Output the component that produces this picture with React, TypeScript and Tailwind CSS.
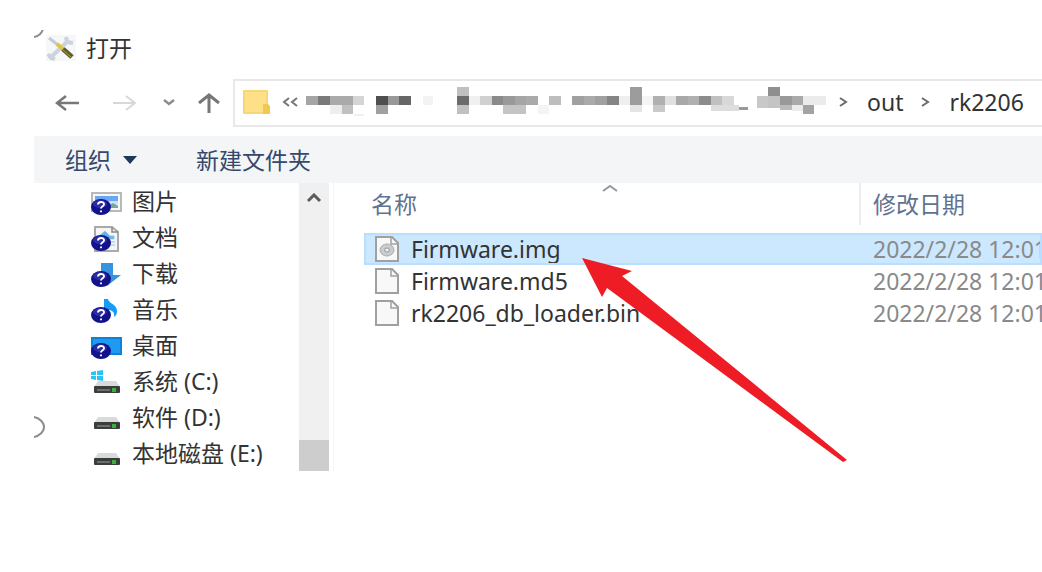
import { ReactNode, useState } from "react";

interface FileProps {
    name: string;
    date: string;
    disc?: boolean;
}

const files: FileProps[] = [
    { name: 'Firmware.img', date: '2022/2/28 12:01', disc: true },
    { name: 'Firmware.md5', date: '2022/2/28 12:01' },
    { name: 'rk2206_db_loader.bin', date: '2022/2/28 12:01' },
]

// hidden part of the path: x, y, width, height, color
const mosaic: [number, number, number, number, string][] = [
    [0, 9, 12, 9, '#a5a5a5'], [12, 9, 12, 9, '#7a7a7a'], [24, 9, 23, 9, '#aaaaaa'], [47, 9, 11, 9, '#d5d5d5'],
    [24, 18, 12, 9, '#eeeeee'], [36, 18, 11, 9, '#c0c0c0'], [48, 27, 10, 2, '#f0f0f0'],
    [70, 9, 12, 9, '#4f4f4f'], [82, 9, 11, 9, '#999999'], [93, 9, 12, 9, '#666666'], [70, 18, 12, 9, '#a0a0a0'],
    [117, 9, 10, 9, '#f3f3f3'],
    [151, 0, 12, 9, '#c0c0c0'], [151, 9, 12, 9, '#6b6b6b'], [151, 18, 12, 9, '#c0c0c0'],
    [163, 9, 11, 9, '#f0f0f0'], [174, 9, 12, 9, '#d0d0d0'], [186, 9, 11, 9, '#8a8a8a'], [197, 9, 12, 9, '#999999'],
    [209, 9, 11, 9, '#a5a5a5'], [220, 9, 12, 9, '#aaaaaa'], [197, 18, 23, 9, '#c4c4c4'], [232, 18, 11, 9, '#f4f4f4'],
    [243, 9, 12, 9, '#bdbdbd'],
    [266, 9, 12, 9, '#a0a0a0'], [278, 9, 11, 9, '#aaaaaa'], [289, 9, 12, 9, '#a0a0a0'], [301, 9, 12, 9, '#858585'],
    [313, 9, 11, 9, '#efefef'], [324, 0, 12, 18, '#9c9c9c'], [324, 18, 12, 7, '#e4e4e4'], [336, 9, 11, 9, '#f5f5f5'],
    [347, 9, 12, 9, '#b0b0b0'], [347, 18, 12, 7, '#c9c9c9'], [359, 9, 11, 9, '#e0e0e0'], [370, 9, 12, 9, '#a8a8a8'],
    [382, 9, 11, 9, '#b0b0b0'], [393, 9, 12, 9, '#8c8c8c'], [405, 9, 11, 9, '#c0c0c0'], [416, 9, 12, 9, '#d8d8d8'],
    [405, 18, 28, 6, '#dddddd'], [433, 20, 9, 3, '#999999'],
    [451, 9, 11, 12, '#c8c8c8'], [462, 0, 12, 9, '#8f8f8f'], [462, 9, 12, 12, '#c4c4c4'], [474, 9, 12, 9, '#999999'],
    [474, 18, 12, 5, '#bbbbbb'], [486, 9, 11, 9, '#aaaaaa'], [486, 18, 11, 6, '#ebebeb'], [497, 9, 23, 9, '#ebebeb'],
    [497, 18, 11, 9, '#a3a3a3'],
]

function Unknown() {
    return (
        <g>
            <ellipse cx="10" cy="17" rx="10" ry="8" fill="#12128a" />
            <ellipse cx="9" cy="14" rx="7" ry="4" fill="#3a3fb8" opacity="0.6" />
            <path d="M7 14.5c0-3.4 6.4-3.4 6 0-.2 1.800-3 1.800-3 4M10 20.500v1.800" fill="none" stroke="#fff" strokeWidth="1.900" />
        </g>
    )
}

function Drive() {
    return (
        <g>
            <path d="M7 11h18l4 6H3z" fill="#d9dadc" />
            <rect x="3" y="16" width="26" height="7" rx="1" fill="#3b3d3d" />
            <path d="M6 20h13" stroke="#6b706c" strokeWidth="2" />
            <rect x="21" y="18" width="4" height="4" fill="#37b03c" />
        </g>
    )
}

const places: { label: string; icon: ReactNode }[] = [
    {
        label: '图片',
        icon: <><rect x="1" y="3" width="29" height="18" fill="#f7f7f7" stroke="#b9b9b9" strokeWidth="2" /><rect x="4" y="6" width="23" height="12" fill="#c6e3fb" /><rect x="4" y="6" width="23" height="5" fill="#6ba5f5" /><path d="M14 18l8-5 5 3v2z" fill="#7aa39a" /><Unknown /></>
    },
    {
        label: '文档',
        icon: <><path d="M4 1h17l6 5v19H4z" fill="#f5f5f5" stroke="#aaaaaa" strokeWidth="2" /><path d="M21 1v5h6" fill="none" stroke="#888" strokeWidth="1.500" /><path d="M8 10l6-5 5 5h4v3H8zM18 16h6M18 19h6" fill="#5fb4e8" stroke="#8fc6e6" /><Unknown /></>
    },
    {
        label: '下载',
        icon: <><path d="M10 1h12v12h8L16 24 4 13h6z" fill="#3593e0" /><Unknown /></>
    },
    {
        label: '音乐',
        icon: <><path d="M13 1h4c1 5 9 5 9 12 0 3-1 5-3 6 1-5-2-7-6-7v8h-4z" fill="#169cf5" /><Unknown /></>
    },
    {
        label: '桌面',
        icon: <><rect x="0" y="3" width="31" height="18" fill="#0c83d9" /><rect x="2" y="5" width="27" height="14" fill="#1e9af0" /><Unknown /></>
    },
    {
        label: '系统 (C:)',
        icon: <><Drive /><path d="M0 2l5-1v4H0zM6 1l6-1v5H6zM0 6h5v4l-5-1zM6 6h6v5l-6-1z" fill="#2cc3f5" /></>
    },
    { label: '软件 (D:)', icon: <Drive /> },
    { label: '本地磁盘 (E:)', icon: <Drive /> },
]

function FileIcon({ disc }: { disc?: boolean }) {
    return (
        <svg width="24" height="26" viewBox="0 0 24 26" className="shrink-0">
            <path d="M1 1h16l6 6v18H1z" fill="#f8f8f8" stroke="#a0a0a0" strokeWidth="2" />
            <path d="M16 2v6h6" fill="none" stroke="#a0a0a0" strokeWidth="1.500" />
            {disc && (
                <>
                    <ellipse cx="12" cy="14" rx="7" ry="6" fill="#c9cccf" stroke="#a9adb0" />
                    <ellipse cx="12" cy="14" rx="2.500" ry="2" fill="#eeeeee" stroke="#999" />
                </>
            )}
        </svg>
    )
}

function Chevron() {
    return (
        <svg width="10" height="10" viewBox="0 0 10 10" fill="none" stroke="#6b6b6b" strokeWidth="2" className="shrink-0">
            <path d="M1 1l6 4-6 4" />
        </svg>
    )
}

export default function App() {
    const [selected, setSelected] = useState('Firmware.img')

    return (
        <div className="bg-white pl-[34px] pt-[30px] overflow-hidden text-[23px] leading-8 text-[#333333] font-['Noto_Sans','Noto_Sans_CJK_SC',sans-serif]">
            <main className="relative overflow-hidden whitespace-nowrap">
                <svg width="12" height="10" viewBox="0 0 12 10" className="absolute left-0 top-0">
                    <path d="M0 7q7-1 9-8" fill="none" stroke="#8c8c8c" strokeWidth="2" />
                </svg>
                <svg width="12" height="24" viewBox="0 0 12 24" className="absolute left-0 top-[385px]">
                    <path d="M0 2c5 1 10 5 10 10S5 21 0 22" fill="none" stroke="#8c8c8c" strokeWidth="2" />
                </svg>

                <header className="flex h-[49px] items-center gap-2.5 pb-3.5 pl-3">
                    <svg width="30" height="26" viewBox="0 0 30 26">
                        <rect width="30" height="26" fill="#f6f7f9" />
                        <path d="M4 23L23 5M2 19l3 4 4 1M20 2l1 5 6 1" fill="none" stroke="#cdd3de" strokeWidth="4" />
                        <path d="M3 3l9 7" stroke="#c3cad6" strokeWidth="3" />
                        <path d="M11 9l8 7" stroke="#e3c63c" strokeWidth="4" />
                        <path d="M17 14l9 8" stroke="#5f5b2c" strokeWidth="5" />
                        <path d="M17 15l8 7" stroke="#b9a53a" strokeWidth="1" />
                    </svg>
                    <h1>打开</h1>
                </header>

                <nav className="flex h-[48px] items-center">
                    <button aria-label="后退" className="flex w-[66px] shrink-0 justify-center">
                        <svg width="24" height="18" viewBox="0 0 24 18" fill="none" stroke="#777777" strokeWidth="2.500"><path d="M24 9H2M11 2L2 9l9 7" /></svg>
                    </button>
                    <button aria-label="前进" className="flex w-[50px] shrink-0 justify-center">
                        <svg width="24" height="18" viewBox="0 0 24 18" fill="none" stroke="#d8d8d8" strokeWidth="2"><path d="M0 9h22M13 2l9 7-9 7" /></svg>
                    </button>
                    <button aria-label="最近浏览的位置" className="flex w-[38px] shrink-0 justify-center">
                        <svg width="12" height="8" viewBox="0 0 12 8" fill="none" stroke="#8c8c8c" strokeWidth="2.500"><path d="M1 1l5 4 5-4" /></svg>
                    </button>
                    <button aria-label="上移" className="flex w-[42px] shrink-0 justify-center">
                        <svg width="22" height="20" viewBox="0 0 22 20" fill="none" stroke="#777777" strokeWidth="3"><path d="M11 20V2M1 10l10-8 10 8" /></svg>
                    </button>
                    <div className="ml-[3px] flex h-full flex-1 items-center border-2 border-r-0 border-[#e8e8e8] pb-0.5 pl-2">
                        <svg width="27" height="26" viewBox="0 0 27 26" className="shrink-0">
                            <rect x="0" y="1" width="25" height="24" rx="1" fill="#f8d773" />
                            <rect x="2" y="3" width="21" height="20" fill="#fee089" />
                            <path d="M20 15h5l2 2v8h-7z" fill="#efc951" />
                        </svg>
                        <svg width="16" height="10" viewBox="0 0 16 10" fill="none" stroke="#777777" strokeWidth="2" className="ml-3 shrink-0">
                            <path d="M7 1L2 5l5 4M15 1l-5 4 5 4" />
                        </svg>
                        <svg width="521" height="30" viewBox="0 0 521 30" className="ml-2 shrink-0">
                            {mosaic.map(([x, y, w, h, color]) => (
                                <rect key={`${x}-${y}`} x={x} y={y} width={w} height={h} fill={color} />
                            ))}
                        </svg>
                        <div className="ml-3 flex items-center gap-[18px]">
                            <Chevron />
                            <a href="#out">out</a>
                            <Chevron />
                            <a href="#rk2206">rk2206</a>
                        </div>
                    </div>
                </nav>

                <div className="mt-[9px] flex h-[47px] items-center gap-[59px] bg-[#f4f5f7] pl-[31px] text-[#33486b]">
                    <button className="flex items-center gap-3">
                        组织
                        <svg width="14" height="8" viewBox="0 0 14 8"><path d="M0 0h14L7 8z" fill="#1e395b" /></svg>
                    </button>
                    <button>新建文件夹</button>
                </div>

                <div className="flex">
                    <ul className="w-[265px] shrink-0">
                        {places.map((place) => (
                            <li key={place.label}>
                                <button className="flex h-9 w-full items-center gap-2.5 pl-[57px]">
                                    <svg width="31" height="26" viewBox="0 0 31 26" className="mt-1 shrink-0">{place.icon}</svg>
                                    {place.label}
                                </button>
                            </li>
                        ))}
                    </ul>

                    <div className="flex w-[30px] shrink-0 flex-col items-center justify-between bg-[#f0f0f0] pt-2.5">
                        <svg width="16" height="10" viewBox="0 0 16 10" fill="none" stroke="#5c5c5c" strokeWidth="3"><path d="M2 8l6-6 6 6" /></svg>
                        <div className="h-[31px] w-full bg-[#cdcdcd]" />
                    </div>

                    <div className="relative ml-1 min-w-0 flex-1 border-l border-[#f5f5f5] pl-[30px]">
                        <table className="w-full table-fixed border-collapse">
                            <thead className="text-[#5f7390]">
                                <tr className="h-[50px] align-top">
                                    <th className="relative w-[497px] p-0 text-left font-normal">
                                        <div className="h-[42px] border-r-2 border-[#ececec] pl-[7px] pt-[5px]">名称</div>
                                        <svg width="16" height="8" viewBox="0 0 16 8" fill="none" stroke="#999999" strokeWidth="2" className="absolute left-[238px] top-px"><path d="M1 7l7-5 7 5" /></svg>
                                    </th>
                                    <th className="p-0 pl-3 pt-[5px] text-left font-normal">修改日期</th>
                                </tr>
                            </thead>
                            <tbody>
                                {files.map((file) => (
                                    <tr
                                        key={file.name}
                                        onClick={() => setSelected(file.name)}
                                        className={selected === file.name ? 'h-8 bg-[#cce8ff] outline-2 -outline-offset-2 outline-[#b9deff]' : 'h-8'}
                                    >
                                        <td className="p-0">
                                            <div className="flex h-8 items-center gap-3 pl-[11px]">
                                                <FileIcon disc={file.disc} />
                                                {file.name}
                                            </div>
                                        </td>
                                        <td className="p-0 pl-3 text-[#8a8a8a]">{file.date}</td>
                                    </tr>
                                ))}
                            </tbody>
                        </table>

                        <svg width="270" height="210" viewBox="0 0 270 210" className="absolute left-[246px] top-[73px]">
                            <path d="M2 2L52 15 42 20 267 204 263 206 27 32 22 41z" fill="#ee1c25" />
                        </svg>
                    </div>
                </div>
            </main>
        </div>
    )
}
